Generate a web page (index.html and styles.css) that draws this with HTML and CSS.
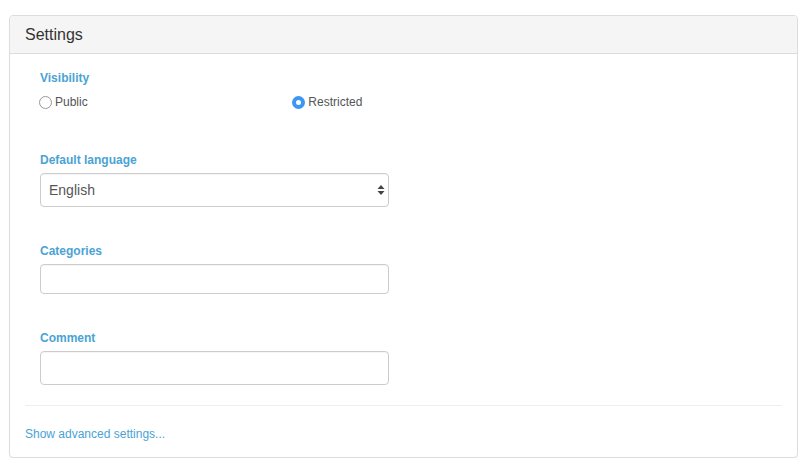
FILE: index.html
```html
<!DOCTYPE html>
<html lang="en">
<head>
    <meta charset="UTF-8">
    <meta name="viewport" content="width=device-width, initial-scale=1.0">
    <title>Settings</title>
    <link rel="stylesheet" href="styles.css">
</head>
<body>
    <div class="panel">
        <div class="panel-heading">
            <h3 class="panel-title">Settings</h3>
        </div>
        <div class="panel-body">
            <form class="settings-form">
                <div class="form-group visibility">
                    <label class="field-label">Visibility</label>
                    <div class="radio-row">
                        <label class="radio">
                            <input type="radio" name="visibility" value="public">
                            <span>Public</span>
                        </label>
                        <label class="radio">
                            <input type="radio" name="visibility" value="restricted" checked>
                            <span>Restricted</span>
                        </label>
                    </div>
                </div>

                <div class="form-group">
                    <label class="field-label" for="language">Default language</label>
                    <div class="select-wrap">
                        <select id="language" class="form-control select">
                            <option>English</option>
                            <option>Deutsch</option>
                            <option>Français</option>
                        </select>
                        <!-- up/down arrows -->
                        <svg class="select-arrows" width="8" height="12" viewBox="0 0 8 12">
                            <path d="M4 1 L7.5 5 L0.5 5 Z" fill="#444"/>
                            <path d="M4 11 L7.5 7 L0.5 7 Z" fill="#444"/>
                        </svg>
                    </div>
                </div>

                <div class="form-group">
                    <label class="field-label" for="categories">Categories</label>
                    <input type="text" id="categories" class="form-control input-sm">
                </div>

                <div class="form-group last">
                    <label class="field-label" for="comment">Comment</label>
                    <input type="text" id="comment" class="form-control">
                </div>
            </form>

            <hr class="divider">

            <a href="#" class="advanced-link">Show advanced settings...</a>
        </div>
    </div>
</body>
</html>
```

FILE: styles.css
```css
body {
    font-family: "Liberation Sans", Arial, sans-serif;
    margin: 0;
    padding: 0;
    background-color: #fff;
    color: #333;
}

.panel {
    margin: 15px 8px 0 9px;
    border: 1px solid #ddd;
    border-radius: 4px;
    background-color: #fff;
    box-shadow: 0 1px 1px rgba(0, 0, 0, 0.05);
}

.panel-heading {
    height: 37px;
    padding: 0 15px;
    display: flex;
    align-items: center;
    background-color: #f5f5f5;
    border-bottom: 1px solid #ddd;
    border-radius: 3px 3px 0 0;
}

.panel-title {
    margin: 0;
    font-size: 16px;
    font-weight: normal;
    color: #333;
}

.panel-body {
    padding: 15px;
}

.form-group {
    padding: 0 15px;
    margin-bottom: 35px;
}

.form-group.visibility {
    margin-bottom: 41px;
}

.form-group.last {
    margin-bottom: 0;
}

.field-label {
    display: block;
    padding-top: 1px;
    font-size: 12px;
    line-height: 16px;
    font-weight: bold;
    color: #4aa3d4;
    margin-bottom: 5px;
}

.visibility .field-label {
    margin-bottom: 8px;
}

.radio-row {
    display: grid;
    grid-template-columns: 1fr 1fr 1fr;
    margin: 0 -15px;
}

.radio {
    display: flex;
    align-items: center;
    height: 16px;
    padding-left: 14px;
    font-size: 12px;
    color: #555;
    cursor: pointer;
}

.radio + .radio {
    padding-left: 15px;
}

.radio input {
    appearance: none;
    -webkit-appearance: none;
    width: 13px;
    height: 13px;
    margin: 0 3px 0 0;
    border: 1px solid #999;
    border-radius: 50%;
    background-color: #fff;
    box-sizing: border-box;
}

.radio input:checked {
    border: 4.5px solid #3b96f5;
    background-color: #fff;
}

.form-control {
    display: block;
    width: 349px;
    height: 34px;
    padding: 6px 8px;
    font-family: inherit;
    font-size: 14px;
    color: #555;
    background-color: #fff;
    border: 1px solid #ccc;
    border-radius: 4px;
    box-sizing: border-box;
    box-shadow: inset 0 1px 1px rgba(0, 0, 0, 0.04);
}

.input-sm {
    height: 30px;
}

.select-wrap {
    position: relative;
    width: 349px;
}

.select {
    appearance: none;
    -webkit-appearance: none;
}

.select-arrows {
    position: absolute;
    right: 4px;
    top: 11px;
    pointer-events: none;
}

.divider {
    margin: 20px 0;
    border: 0;
    border-top: 1px solid #eee;
}

.advanced-link {
    display: block;
    font-size: 12px;
    line-height: 16px;
    color: #4aa3d4;
    text-decoration: none;
}
```
